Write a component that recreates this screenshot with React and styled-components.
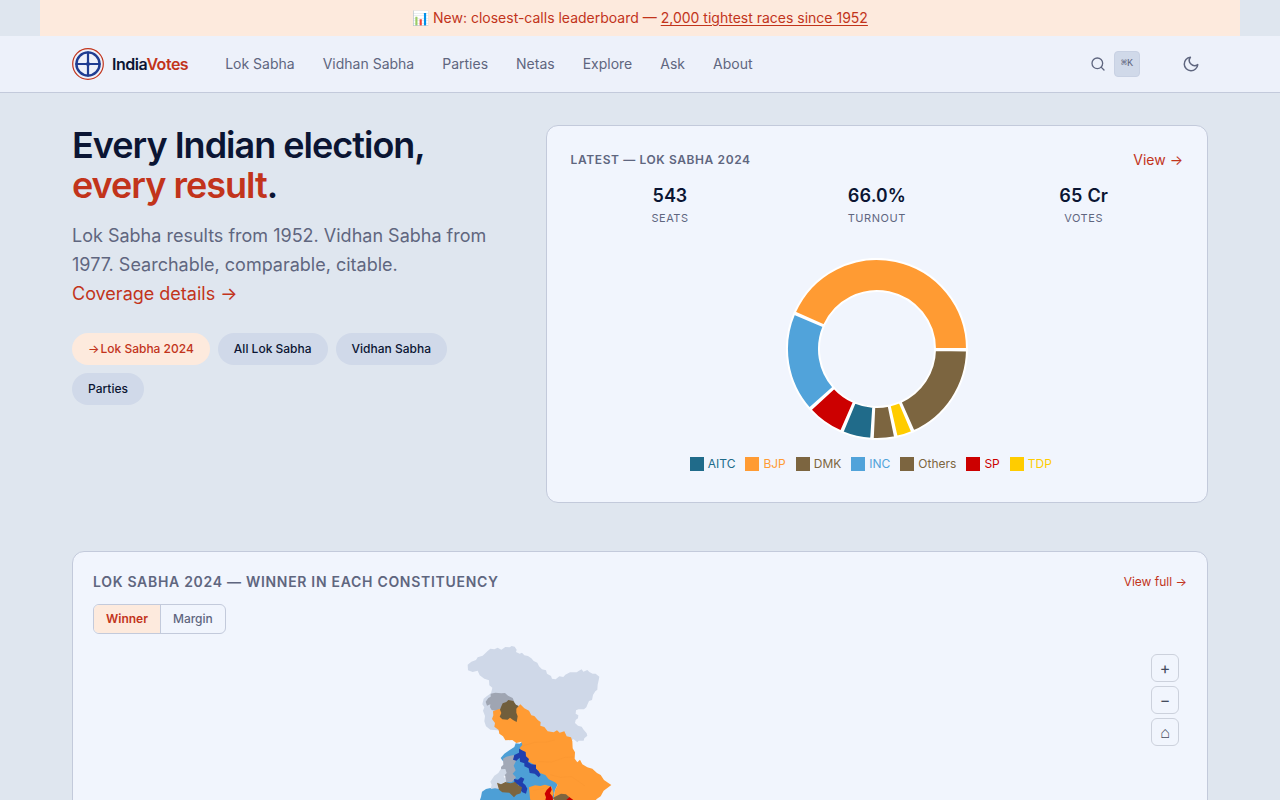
import React, { useState } from "react";
import styled, { createGlobalStyle, css } from "styled-components";

const c = {
  page: "#dfe6ef",
  bar: "#edf1fa",
  card: "#f1f5fd",
  pill: "#d0d9e9",
  line: "#c3cadb",
  ink: "#0b1533",
  muted: "#5f667f",
  accent: "#c2341b",
  accentSoft: "#fdeadd",
};

const GlobalStyle = createGlobalStyle`
  *, *::before, *::after { box-sizing: border-box; }
  body {
    margin: 0;
    background: ${c.page};
    color: ${c.ink};
    font-family: Inter, "Liberation Sans", sans-serif;
    font-size: 14px;
    line-height: 20px;
  }
  h1, h2, p, ul, dl, dd { margin: 0; padding: 0; }
  button { font-family: inherit; cursor: pointer; }
  a { text-decoration: none; }
`;

const Banner = styled.aside`
  max-width: 1200px;
  margin: 0 auto;
  padding: 8px 16px;
  background: ${c.accentSoft};
  color: ${c.accent};
  text-align: center;
`;

const BannerLink = styled.a`
  color: inherit;
  text-decoration: underline;
  text-underline-offset: 2px;
`;

const Header = styled.header`
  background: ${c.bar};
  border-bottom: 1px solid ${c.line};
`;

const HeaderInner = styled.div`
  max-width: 1200px;
  height: 56px;
  margin: 0 auto;
  padding: 0 32px;
  display: flex;
  align-items: center;
`;

const Brand = styled.a`
  display: flex;
  align-items: center;
  gap: 8px;
  margin-right: 37px;
  color: ${c.ink};
  font-size: 16px;
  font-weight: 600;
  letter-spacing: -0.03em;
`;

const Accent = styled.span`
  color: ${c.accent};
`;

const Nav = styled.nav`
  display: flex;
  gap: 28px;
`;

const NavLink = styled.a`
  color: ${c.muted};
`;

const Tools = styled.div`
  display: flex;
  align-items: center;
  gap: 34px;
  margin-left: auto;
`;

const ToolButton = styled.button`
  display: flex;
  align-items: center;
  justify-content: center;
  gap: 8px;
  min-width: 34px;
  height: 34px;
  padding: 0;
  border: 0;
  background: none;
  color: ${c.muted};
`;

const Kbd = styled.kbd`
  width: 26px;
  height: 26px;
  border: 1px solid #c8d1e3;
  border-radius: 4px;
  background: ${c.pill};
  font-family: "Liberation Mono", monospace;
  font-size: 10px;
  line-height: 24px;
`;

const Main = styled.main`
  max-width: 1200px;
  margin: 0 auto;
  padding: 32px;
`;

const Hero = styled.section`
  display: grid;
  grid-template-columns: 2fr 3fr;
  gap: 32px;
  margin-bottom: 48px;
`;

const Title = styled.h1`
  margin-bottom: 16px;
  font-size: 36px;
  line-height: 40px;
  font-weight: 600;
  letter-spacing: -1px;
`;

const Lead = styled.p`
  margin-bottom: 24px;
  color: ${c.muted};
  font-size: 18px;
  line-height: 29px;
`;

const TextLink = styled.a`
  color: ${c.accent};
  font-size: ${(p) => p.$size || "inherit"};
`;

const LeadLink = styled(TextLink)`
  display: inline-block;
  line-height: 30px;
`;

const Chips = styled.div`
  display: flex;
  flex-wrap: wrap;
  gap: 8px;
`;

const Chip = styled.a`
  display: flex;
  gap: 1px;
  padding: 6px 16px;
  border-radius: 16px;
  background: ${(p) => (p.$active ? c.accentSoft : c.pill)};
  color: ${(p) => (p.$active ? c.accent : c.ink)};
  font-size: 12px;
  font-weight: 500;
`;

const Card = styled.section`
  padding: ${(p) => p.$pad};
  border: 1px solid ${c.line};
  border-radius: 12px;
  background: ${c.card};
`;

const CardHead = styled.div`
  display: flex;
  align-items: center;
  justify-content: space-between;
  margin-bottom: ${(p) => p.$gap};
`;

const CardTitle = styled.h2`
  color: ${c.muted};
  font-size: ${(p) => p.$size};
  font-weight: 600;
  letter-spacing: ${(p) => p.$tracking};
  text-transform: uppercase;
`;

const Stats = styled.dl`
  display: grid;
  grid-template-columns: repeat(3, 1fr);
  gap: 8px;
  margin-bottom: 32px;
  text-align: center;
`;

const Stat = styled.div`
  display: flex;
  flex-direction: column-reverse;
`;

const StatLabel = styled.dt`
  color: ${c.muted};
  font-size: 11px;
  line-height: 16px;
  letter-spacing: 0.05em;
  text-transform: uppercase;
`;

const StatValue = styled.dd`
  font-size: 18px;
  line-height: 28px;
  font-weight: 600;
  font-variant-numeric: tabular-nums;
`;

const Chart = styled.svg`
  display: block;
  margin: 0 auto 14px;
`;

const Legend = styled.ul`
  display: flex;
  justify-content: center;
  gap: 10px;
  padding: 0 12px 4px 0;
  list-style: none;
`;

const LegendItem = styled.li`
  display: flex;
  align-items: center;
  gap: 4px;
  color: ${(p) => p.$color};
  font-size: 12px;

  &::before {
    content: "";
    width: 14px;
    height: 14px;
    background: ${(p) => p.$color};
  }
`;

const Segmented = styled.div`
  display: inline-flex;
  margin-bottom: 12px;
  overflow: hidden;
  border: 1px solid ${c.line};
  border-radius: 6px;
  vertical-align: top;
`;

const Segment = styled.button`
  padding: 4px 12px;
  border: 0;
  background: transparent;
  color: ${c.muted};
  font-size: 12px;
  line-height: 20px;
  font-weight: 500;

  & + & {
    border-left: 1px solid ${c.line};
  }

  ${(p) =>
    p.$active &&
    css`
      background: ${c.accentSoft};
      color: ${c.accent};
      font-weight: 600;
    `}
`;

const MapArea = styled.div`
  position: relative;
`;

const MapDrawing = styled.svg`
  display: block;
  width: 100%;
  height: 200px;
`;

const ZoomControls = styled.div`
  position: absolute;
  top: 8px;
  right: 8px;
  display: flex;
  flex-direction: column;
  gap: 4px;
`;

const ZoomButton = styled.button`
  width: 28px;
  height: 28px;
  padding: 0;
  border: 1px solid #ccd1dc;
  border-radius: 6px;
  background: ${c.card};
  color: #444b5c;
  font-size: 16px;
  line-height: 26px;
`;

const navItems = ["Lok Sabha", "Vidhan Sabha", "Parties", "Netas", "Explore", "Ask", "About"];
const chips = ["Lok Sabha 2024", "All Lok Sabha", "Vidhan Sabha", "Parties"];
const stats = [
  ["Seats", "543"],
  ["Turnout", "66.0%"],
  ["Votes", "65 Cr"],
];
const parties = [
  { name: "BJP", seats: 240, color: "#ff9b33" },
  { name: "INC", seats: 99, color: "#51a3da" },
  { name: "SP", seats: 37, color: "#cc0000" },
  { name: "AITC", seats: 29, color: "#206b8a" },
  { name: "DMK", seats: 22, color: "#7c6540" },
  { name: "TDP", seats: 16, color: "#ffcc00" },
  { name: "Others", seats: 100, color: "#7c6540" },
];
const legend = [...parties].sort((a, b) => a.name.localeCompare(b.name));

function ringSlice(from, to, inner, outer) {
  const at = (deg, r) => {
    const t = (deg * Math.PI) / 180;
    return `${(r * Math.cos(t)).toFixed(3)} ${(-r * Math.sin(t)).toFixed(3)}`;
  };
  const large = to - from > 180 ? 1 : 0;
  return `M${at(from, outer)}A${outer} ${outer} 0 ${large} 0 ${at(to, outer)}L${at(to, inner)}A${inner} ${inner} 0 ${large} 1 ${at(from, inner)}Z`;
}

function SeatChart() {
  const pad = 1;
  const total = parties.reduce((sum, p) => sum + p.seats, 0);
  const span = 360 - pad * parties.length;
  let angle = 0;
  return (
    <Chart width="182" height="182" viewBox="-91 -91 182 182" role="img" aria-label="Seats by party">
      {parties.map((p) => {
        const start = angle;
        const end = start + (p.seats / total) * span;
        angle = end + pad;
        return <path key={p.name} d={ringSlice(start, end, 58, 90)} fill={p.color} stroke="#fff" strokeWidth="2" />;
      })}
    </Chart>
  );
}

function Logo() {
  return (
    <svg width="32" height="32" viewBox="0 0 32 32" fill="none" aria-hidden="true">
      <circle cx="16" cy="16" r="15.3" stroke="#c2341b" strokeWidth="1.2" />
      <circle cx="16" cy="16" r="11.6" stroke="#1f3d91" strokeWidth="2.4" />
      <path d="M16 3.5v25M3.5 16h25" stroke="#1f3d91" strokeWidth="2.2" />
      <circle cx="16" cy="16" r="2" fill="#1f3d91" />
    </svg>
  );
}

function SearchIcon() {
  return (
    <svg width="16" height="16" viewBox="0 0 24 24" fill="none" stroke="currentColor" strokeWidth="2" strokeLinecap="round" aria-hidden="true">
      <circle cx="11" cy="11" r="8" />
      <path d="m21 21-4.3-4.3" />
    </svg>
  );
}

function MoonIcon() {
  return (
    <svg width="18" height="18" viewBox="0 0 24 24" fill="none" stroke="currentColor" strokeWidth="2" strokeLinecap="round" strokeLinejoin="round" aria-hidden="true">
      <path d="M21 12.79A9 9 0 1 1 11.21 3 7 7 0 0 0 21 12.79z" />
    </svg>
  );
}

function WinnerMap() {
  return (
    <MapDrawing viewBox="-645 18 2400 600" preserveAspectRatio="xMidYMin meet" role="img" aria-label="Winning party in each constituency">
      <path
        fill="#cfd8e8"
        d="M38 74L49 65 63 60 68 52 83 47 98 33 106 26 118 28 128 23 139 29 151 21 164 22 170 18 179 20 185 29 183 36 194 41 201 38 208 46 219 48 229 55 236 63 247 68 252 79 261 88 273 91 276 101 288 108 291 116 302 118 313 109 325 111 331 104 345 97 365 97 372 92 380 88 385 95 397 90 403 96 413 101 422 101 433 110 431 121 428 134 427 149 421 154 414 165 411 180 402 183 397 194 394 202 387 208 371 208 363 211 362 221 370 226 369 235 362 240 360 249 369 257 380 260 386 269 395 280 397 287 388 295 386 302 371 302 367 307 356 298 344 302 336 291 327 281 310 290 294 300 180 300 128 271 106 269 93 259 88 244 90 228 84 212 88 202 82 193 86 176 96 168 108 160 112 143 103 136 102 121 88 116 74 106 68 92 53 96 39 91Z"
      />
      <path fill="#9fa5b2" d="M92 185L100 174 107 170 107 161 121 158 139 160 150 159 159 167 173 174 178 186 160 200 136 207 125 213 110 210 105 202 106 193 96 197Z" />
      <path fill="#4d9fd6" d="M137 354L148 341 163 331 178 321 182 310 194 311 207 302 260 340 300 400 308 434 300 450 290 510 64 510 78 471 81 455 93 447 110 443 130 438 149 440 160 414 151 367 143 362Z" />
      <path
        fill="#ff9b33"
        d="M114 214L130 208 150 205 188 201 196 193 208 205 222 212 229 226 238 228 249 241 257 246 256 257 268 261 278 274 296 277 306 271 314 278 328 274 335 289 348 292 352 304 353 325 360 337 359 356 367 367 375 359 382 373 397 382 412 386 426 399 437 405 447 420 459 428 469 435 458 443 446 452 437 469 424 478 416 510 290 510 300 450 308 434 300 427 281 418 271 405 253 398 241 383 234 372 216 362 207 341 194 324 202 315 199 305 184 309 172 300 151 301 144 289 133 281 131 270 118 260 120 249 111 237 115 226Z"
      />
      <path fill="#ff9b33" d="M222 442L240 436 256 438 270 434 290 440 296 460 280 510 232 510 225 475Z" />
      <path fill="#705e3c" d="M138 201L143 190 154 186 160 180 175 183 183 194 191 198 184 206 184 218 188 229 185 246 174 240 165 233 158 239 142 238 134 230 139 219 135 209Z" />
      <path fill="#a2a9b7" d="M144 356L154 350 176 345 183 363 176 377 182 391 173 401 183 412 171 426 152 427 151 408 139 398 138 381 145 374Z" />
      <path fill="#d1dae8" d="M151 387L155 399 146 409 154 423 142 430 137 448 120 445 107 447 110 434 106 425 118 407 130 399 137 388Z" />
      <path fill="#203fae" d="M178 345L192 338 192 326 204 332 212 336 213 349 222 357 219 366 229 373 243 374 243 386 251 394 257 405 251 412 239 401 224 399 221 385 208 379 208 370 195 365 194 353 184 362 174 359ZM177 417L189 419 198 411 208 416 203 428 211 435 217 446 213 461 202 457 194 448 192 435 179 431Z" />
      <path fill="#7c6540" d="M126 428L138 433 151 426 167 430 180 426 190 436 201 442 197 460 184 464 177 472 163 458 142 457 132 449Z" />
      <path fill="#cc0000" d="M287 439L290 449 285 460 293 470 294 480 300 510 267 510 270 485 273 472 269 461 275 450ZM330 476L342 470 351 477 362 485 367 510 325 510Z" />
      <path fill="#7c6540" d="M293 474L306 467 318 461 333 463 343 472 333 481 330 510 300 510 301 482Z" />
      <path fill="none" stroke="#e9892a" strokeWidth="1" opacity=".45" d="M202 318L240 307 275 306 300 300M250 365L290 366 330 352 356 351M286 404L316 412 350 410 390 438M235 451L268 445" />
    </MapDrawing>
  );
}

export default function App() {
  const [mode, setMode] = useState("Winner");
  return (
    <>
      <GlobalStyle />
      <Banner>
        📊 New: closest-calls leaderboard — <BannerLink href="#closest">2,000 tightest races since 1952</BannerLink>
      </Banner>
      <Header>
        <HeaderInner>
          <Brand href="#home">
            <Logo />
            <span>
              India<Accent>Votes</Accent>
            </span>
          </Brand>
          <Nav>
            {navItems.map((item) => (
              <NavLink key={item} href="#nav">
                {item}
              </NavLink>
            ))}
          </Nav>
          <Tools>
            <ToolButton type="button" aria-label="Search">
              <SearchIcon />
              <Kbd>⌘K</Kbd>
            </ToolButton>
            <ToolButton type="button" aria-label="Dark theme">
              <MoonIcon />
            </ToolButton>
          </Tools>
        </HeaderInner>
      </Header>
      <Main>
        <Hero>
          <div>
            <Title>
              Every Indian election,
              <br />
              <Accent>every result</Accent>.
            </Title>
            <Lead>
              Lok Sabha results from 1952. Vidhan Sabha from 1977. Searchable, comparable, citable.{" "}
              <LeadLink href="#coverage">Coverage details →</LeadLink>
            </Lead>
            <Chips>
              {chips.map((chip, i) => (
                <Chip key={chip} href="#browse" $active={i === 0}>
                  {i === 0 && <span>→</span>}
                  {chip}
                </Chip>
              ))}
            </Chips>
          </div>
          <Card $pad="24px">
            <CardHead $gap="12px">
              <CardTitle $size="12px" $tracking="0.05em">
                Latest — Lok Sabha 2024
              </CardTitle>
              <TextLink href="#latest">View →</TextLink>
            </CardHead>
            <Stats>
              {stats.map(([label, value]) => (
                <Stat key={label}>
                  <StatLabel>{label}</StatLabel>
                  <StatValue>{value}</StatValue>
                </Stat>
              ))}
            </Stats>
            <SeatChart />
            <Legend>
              {legend.map((p) => (
                <LegendItem key={p.name} $color={p.color}>
                  {p.name}
                </LegendItem>
              ))}
            </Legend>
          </Card>
        </Hero>
        <Card $pad="20px">
          <CardHead $gap="12px">
            <CardTitle $size="14px" $tracking="0.05em">
              Lok Sabha 2024 — Winner in each constituency
            </CardTitle>
            <TextLink href="#map" $size="12px">
              View full →
            </TextLink>
          </CardHead>
          <Segmented>
            {["Winner", "Margin"].map((m) => (
              <Segment key={m} type="button" $active={mode === m} aria-pressed={mode === m} onClick={() => setMode(m)}>
                {m}
              </Segment>
            ))}
          </Segmented>
          <MapArea>
            <WinnerMap />
            <ZoomControls>
              <ZoomButton type="button" aria-label="Zoom in">+</ZoomButton>
              <ZoomButton type="button" aria-label="Zoom out">−</ZoomButton>
              <ZoomButton type="button" aria-label="Reset view">⌂</ZoomButton>
            </ZoomControls>
          </MapArea>
        </Card>
      </Main>
    </>
  );
}
